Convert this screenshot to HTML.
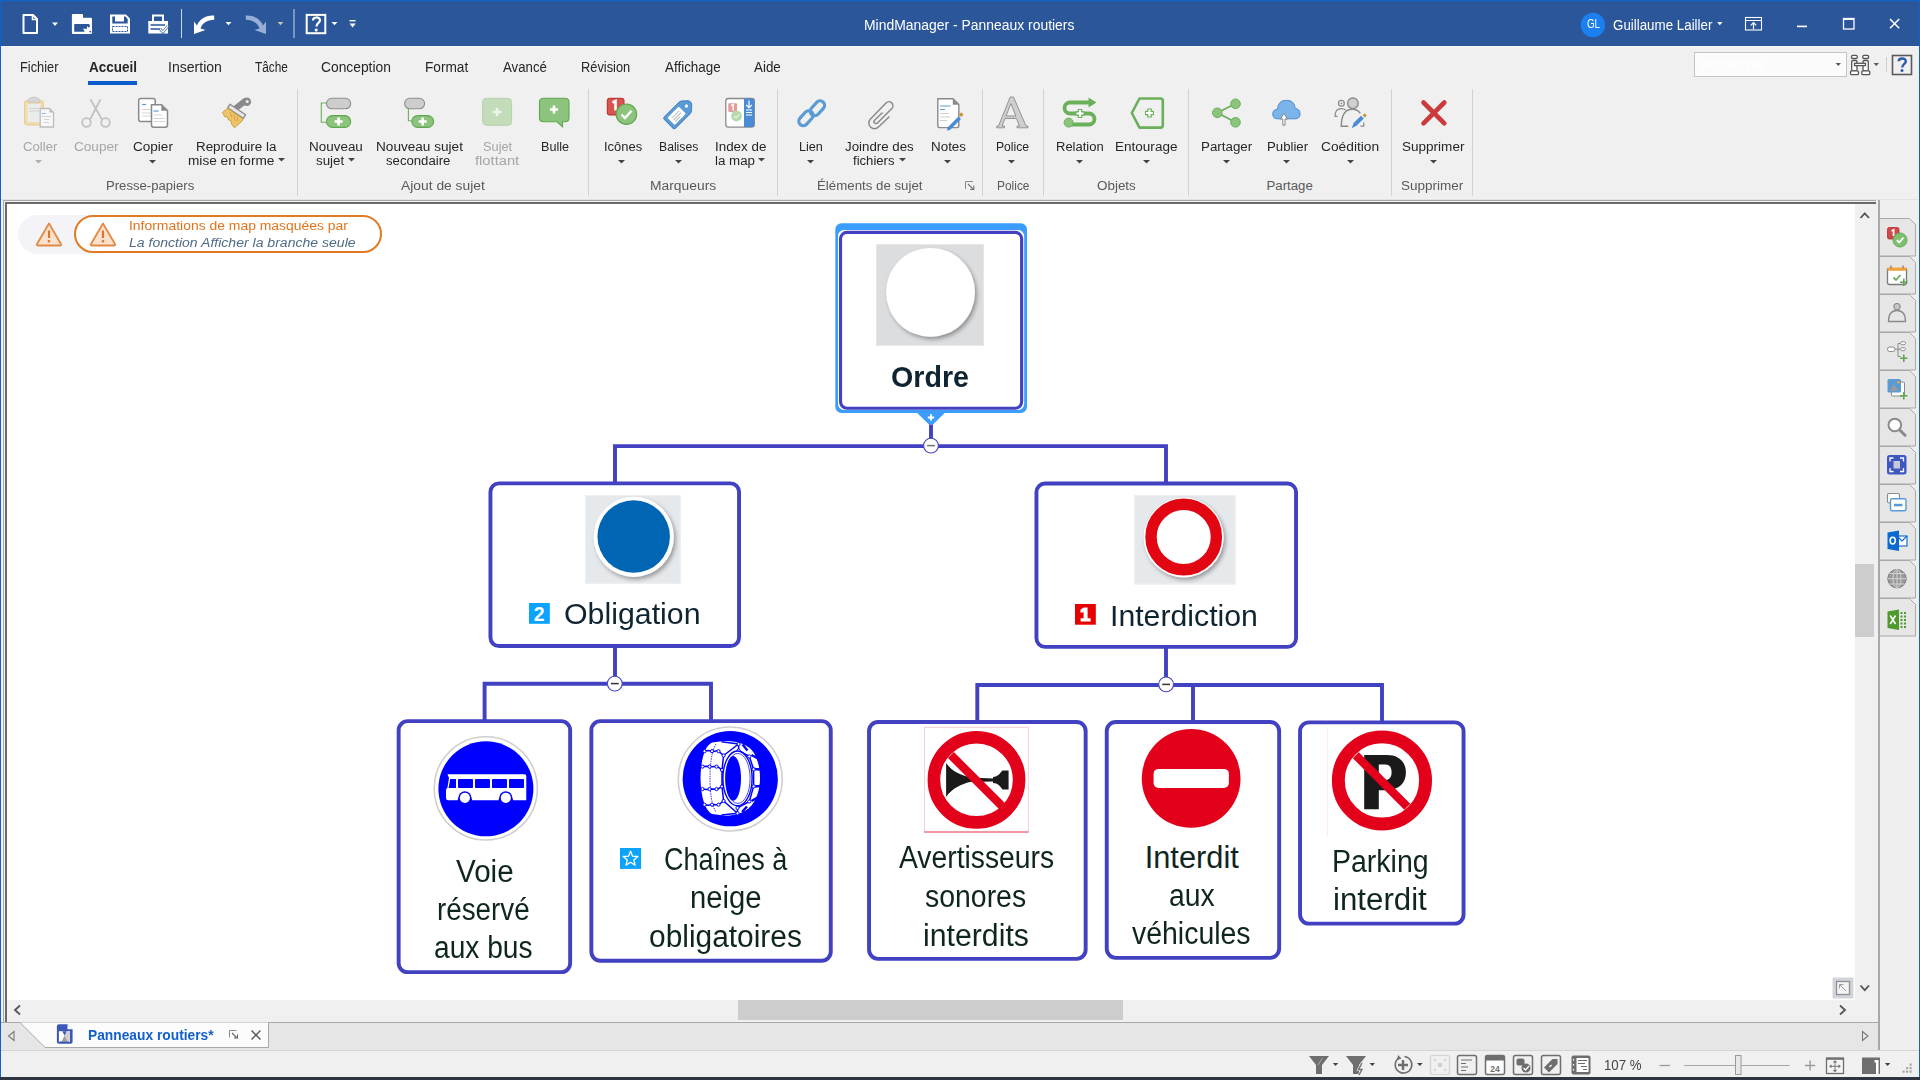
<!DOCTYPE html>
<html><head><meta charset="utf-8"><title>MindManager - Panneaux routiers</title>
<style>
html,body{margin:0;padding:0;}
body{width:1920px;height:1080px;position:relative;overflow:hidden;background:#f0f0f0;font-family:"Liberation Sans",sans-serif;}
.t{position:absolute;white-space:nowrap;transform-origin:0 0;}
svg{overflow:visible;}
</style></head><body>
<div style="position:absolute;left:0px;top:0px;width:1920px;height:46px;background:#2b579a;"></div><div style="position:absolute;left:0px;top:0px;width:1920px;height:1px;background:#0d63cc;"></div><div style="position:absolute;left:0px;top:0px;width:1px;height:1080px;background:#0d63cc;"></div><div style="position:absolute;left:1919px;top:0px;width:1px;height:1080px;background:#0d63cc;"></div><div style="position:absolute;left:1px;top:46px;width:1918px;height:1px;background:#f7f3ee;"></div><div style="position:absolute;left:0px;top:1077px;width:1920px;height:3px;background:#2d3640;"></div><div style="position:absolute;left:1px;top:199px;width:1917px;height:1px;background:#e2e2e2;"></div><div style="position:absolute;left:3px;top:200px;width:1876px;height:1px;background:#a8a8a8;"></div><div style="position:absolute;left:3px;top:200px;width:1px;height:822px;background:#a8a8a8;"></div><div style="position:absolute;left:5px;top:202px;width:1871px;height:2px;background:#6a6a6a;"></div><div style="position:absolute;left:5px;top:202px;width:2px;height:820px;background:#6a6a6a;"></div><div style="position:absolute;left:7px;top:204px;width:1848px;height:796px;background:#ffffff;"></div><div style="position:absolute;left:1855px;top:204px;width:21px;height:796px;background:#f0f0f0;"></div><div style="position:absolute;left:7px;top:1000px;width:1869px;height:22px;background:#f0f0f0;"></div><div style="position:absolute;left:1876px;top:200px;width:2px;height:822px;background:#f0f0f0;"></div><div style="position:absolute;left:1878px;top:200px;width:2px;height:850px;background:#a8a8a8;"></div><div style="position:absolute;left:3px;top:1022px;width:1876px;height:1px;background:#a8a8a8;"></div><div style="position:absolute;left:1px;top:1023px;width:1877px;height:27px;background:#e6e6e6;"></div><div style="position:absolute;left:1px;top:1050px;width:1918px;height:1px;background:#d4d4d4;"></div><div style="position:absolute;left:1880px;top:200px;width:38px;height:850px;background:#efefef;"></div><svg style="position:absolute;left:0px;top:0px;" width="1920" height="1080" viewBox="0 0 1920 1080"><path d="M841.5,223.3 H1020.8 A6.2,6.2 0 0 1 1027,229.5 V406.8 A6.2,6.2 0 0 1 1020.8,413 H841.5 A6.2,6.2 0 0 1 835.3,406.8 V229.5 A6.2,6.2 0 0 1 841.5,223.3 Z M844,230 H1018 A6,6 0 0 1 1024.2,236 V404 A6,6 0 0 1 1018,410 H844 A6,6 0 0 1 838,404 V236 A6,6 0 0 1 844,230 Z" fill="#3d9dff" fill-rule="evenodd"/><path d="M916.7,412.5 H945.2 L933,424.6 H929 Z" fill="#3d9dff"/><path d="M931,414.2 V420.6 M927.8,417.4 H934.2" stroke="#fff" stroke-width="2"/><path d="M931,424.5 V446.1" stroke="#4141c1" stroke-width="3.9" fill="none"/><path d="M615,484 V446.1 H1166 V484" stroke="#4141c1" stroke-width="3.9" fill="none" stroke-linejoin="miter"/><path d="M615,646 V683.75" stroke="#4141c1" stroke-width="3.9" fill="none"/><path d="M484.6,722 V683.75 H711 V722" stroke="#4141c1" stroke-width="3.9" fill="none" stroke-linejoin="miter"/><path d="M1166,647 V685" stroke="#4141c1" stroke-width="3.9" fill="none"/><path d="M977.3,722 V685 H1382 V722" stroke="#4141c1" stroke-width="3.9" fill="none" stroke-linejoin="miter"/><path d="M1193,685 V722" stroke="#4141c1" stroke-width="3.9" fill="none"/><rect x="840.55" y="232.35" width="181.10" height="175.90" rx="6.5" ry="6.5" fill="#fff" stroke="#4141c1" stroke-width="3.1"/><rect x="490.45" y="483.35" width="248.60" height="162.70" rx="8.5" ry="8.5" fill="#fff" stroke="#4141c1" stroke-width="3.9"/><rect x="1036.45" y="483.55" width="259.60" height="163.30" rx="8.5" ry="8.5" fill="#fff" stroke="#4141c1" stroke-width="3.9"/><rect x="398.65" y="721.15" width="171.50" height="251.00" rx="9" ry="9" fill="#fff" stroke="#4141c1" stroke-width="3.9"/><rect x="591.35" y="721.15" width="239.40" height="239.60" rx="9" ry="9" fill="#fff" stroke="#4141c1" stroke-width="3.9"/><rect x="869.05" y="721.95" width="216.60" height="236.90" rx="9" ry="9" fill="#fff" stroke="#4141c1" stroke-width="3.9"/><rect x="1106.75" y="721.95" width="172.40" height="235.90" rx="9" ry="9" fill="#fff" stroke="#4141c1" stroke-width="3.9"/><rect x="1300.05" y="722.35" width="163.50" height="201.30" rx="9" ry="9" fill="#fff" stroke="#4141c1" stroke-width="3.9"/><circle cx="931" cy="445.6" r="7.4" fill="#fff" stroke="#4848c8" stroke-width="1.1"/><path d="M927.1,445.6 H934.9" stroke="#707070" stroke-width="1.5"/><circle cx="614.8" cy="683.6" r="7.4" fill="#fff" stroke="#4848c8" stroke-width="1.1"/><path d="M610.9,683.6 H618.6999999999999" stroke="#333" stroke-width="1.5"/><circle cx="1166.1" cy="684.4" r="7.4" fill="#fff" stroke="#4848c8" stroke-width="1.1"/><path d="M1162.1999999999998,684.4 H1170.0" stroke="#333" stroke-width="1.5"/></svg><svg style="position:absolute;left:0px;top:0px;" width="1920" height="1080" viewBox="0 0 1920 1080"><defs><filter id="sh" x="-30%" y="-30%" width="160%" height="160%"><feDropShadow dx="2" dy="2.5" stdDeviation="2" flood-color="#000" flood-opacity="0.35"/></filter></defs><rect x="876" y="244" width="108" height="102" fill="#dcdddf"/><rect x="876.5" y="244.5" width="107" height="101" fill="none" stroke="#e6e7e9" stroke-width="1"/><circle cx="930.5" cy="292.3" r="44.4" fill="#fff" filter="url(#sh)"/><rect x="585" y="495" width="95.7" height="88.7" fill="#e6e9ec"/><rect x="585.5" y="495.5" width="94.7" height="87.7" fill="none" stroke="#eef0f2" stroke-width="1"/><circle cx="633.7" cy="536.8" r="40.1" fill="#fff" filter="url(#sh)"/><circle cx="633.7" cy="536.5" r="36.25" fill="#0066b3"/><rect x="1134.2" y="495" width="101.4" height="89.4" fill="#e6e9ec"/><rect x="1134.7" y="495.5" width="100.4" height="88.4" fill="none" stroke="#eef0f2" stroke-width="1"/><circle cx="1183.7" cy="537.4" r="39.9" fill="#fff" filter="url(#sh)"/><circle cx="1183.7" cy="537" r="32.7" fill="none" stroke="#e20613" stroke-width="11.4"/><circle cx="485.8" cy="788.4" r="51.6" fill="#fff" stroke="#cfcfcf" stroke-width="1.6"/><circle cx="485.9" cy="788.8" r="47.5" fill="#0000fe"/><path d="M447.5,774.2 H524.5 Q526.3,774.2 526.3,776 V800.3 H513.2 A7.6,7.6 0 0 0 498.4,800.3 H472.3 A7.6,7.6 0 0 0 457.5,800.3 H448.2 Q446,800.3 446,798 V789.5 L447.5,787.5 L449,778 Z" fill="#fff"/><g fill="#0000fe"><path d="M450.2,779 H456 V788 H448.6 Z"/><rect x="458" y="779" width="15" height="9" rx="0.8"/><rect x="475" y="779" width="15" height="9" rx="0.8"/><rect x="492" y="779" width="15" height="9" rx="0.8"/><rect x="509" y="779" width="15" height="9" rx="0.8"/></g><circle cx="464.9" cy="797.8" r="6.6" fill="#0000fe"/><circle cx="464.9" cy="797.8" r="5.1" fill="#fff"/><circle cx="505.8" cy="797.8" r="6.6" fill="#0000fe"/><circle cx="505.8" cy="797.8" r="5.1" fill="#fff"/><circle cx="730.25" cy="779" r="52" fill="#fff" stroke="#cfcfcf" stroke-width="1.6"/><circle cx="730.25" cy="778.7" r="47.6" fill="#0000fe"/><path d="M712,742.5 C705,746 701,758 700.5,778 C701,798 705,810 712,814 L724,815.6 C736,816 748,812 754,802 C758.5,794 760,786 760,778 C760,770 758.5,761 754,753 C748,744 736,740.5 724,741 Z" fill="#fff"/><g fill="none" stroke="#0000fe" stroke-width="1.5" stroke-linejoin="round"><path d="M703,751.2 L708.5,750.6 L713,751.4 L718,750.8 L723.6,755.5"/><path d="M701.3,766.6 L707,766.2 L712.5,766.8 L717,766.2 L722,770"/><path d="M701.3,789.1 L707,789.6 L712.5,789 L717,789.6 L722,786.5"/><path d="M703,804.7 L708.5,805.3 L713,804.5 L718,805.1 L723.6,801"/><path d="M723.6,755.5 L738.6,744 L738.6,750.5 L749.3,756.4 L753.6,769.3 L753.6,786.4 L749.3,801.5 L737.5,807.9 L737.5,813.3 L723.6,801"/><path d="M722,770 L723.6,755.5 M722,786.5 L723.6,801 M722,770 V786.5"/><path d="M738.6,744 L721.5,741.8 M737.5,813.3 L721.5,815"/></g><g fill="none" stroke="#0000fe" stroke-width="2.4"><path d="M742.5,744.5 L747.5,750.5 M751.5,755 L759,759 M754,769 L760.5,769.5 M754,786.5 L760.5,786 M751.5,801 L758.5,797 M742,812 L747,806.5"/></g><g fill="none" stroke="#0000fe" stroke-width="0.8" stroke-dasharray="1.5,1"><path d="M716,744 C711,752 710,768 710,778 C710,790 711,804 716,812"/></g><g fill="#fff" stroke="#0000fe" stroke-width="1"><circle cx="704.5" cy="751.2" r="1.6"/><circle cx="712" cy="751.2" r="1.6"/><circle cx="718.5" cy="751.2" r="1.6"/><circle cx="702.5" cy="766.6" r="1.6"/><circle cx="709.5" cy="766.6" r="1.6"/><circle cx="716.5" cy="766.6" r="1.6"/><circle cx="702.5" cy="789.1" r="1.6"/><circle cx="709.5" cy="789.1" r="1.6"/><circle cx="716.5" cy="789.1" r="1.6"/><circle cx="704.5" cy="804.7" r="1.6"/><circle cx="712" cy="804.7" r="1.6"/><circle cx="718.5" cy="804.7" r="1.6"/><circle cx="738.6" cy="744" r="1.6"/><circle cx="738.6" cy="750.5" r="1.6"/><circle cx="749.3" cy="756.4" r="1.6"/><circle cx="753.6" cy="769.3" r="1.6"/><circle cx="753.6" cy="786.4" r="1.6"/><circle cx="749.3" cy="801.5" r="1.6"/><circle cx="737.5" cy="807.9" r="1.6"/><circle cx="737.5" cy="813.3" r="1.6"/><circle cx="723.6" cy="755.5" r="1.6"/><circle cx="722" cy="770" r="1.6"/><circle cx="722" cy="786.5" r="1.6"/><circle cx="723.6" cy="801" r="1.6"/></g><ellipse cx="737.5" cy="778.4" rx="14.6" ry="27.4" fill="#fff" stroke="#0000fe" stroke-width="1.4"/><ellipse cx="737.8" cy="778.4" rx="12.3" ry="25" fill="none" stroke="#0000fe" stroke-width="0.7"/><ellipse cx="733.2" cy="778.4" rx="7.8" ry="22.3" fill="#0000fe"/><rect x="924.5" y="727.3" width="103.8" height="104.7" fill="none" stroke="#f6c4cc" stroke-width="0.8"/><path d="M924.3,832 H1028.6" stroke="#e84a5f" stroke-width="1"/><circle cx="976.5" cy="779.8" r="42.6" fill="#fff" stroke="#e2001a" stroke-width="12.6"/><path d="M946.1,763 C952,772 962,775 970,777.5 L993,778.5 L993,777 C998,777 1000,773 1002.5,770.5 L1008.6,770.5 V789.6 H1002.5 C1000,786 998,783 993,783 L993,781.5 L970,782 C962,784 952,788 946.1,797 Z" fill="#1a1a1a"/><path d="M950.9,755 L1001.9,806" stroke="#e2001a" stroke-width="8.4"/><circle cx="1191.15" cy="778.45" r="49.4" fill="#e2001a"/><rect x="1153.6" y="768.9" width="75.3" height="19.1" rx="5" fill="#fff"/><path d="M1327.3,727 V836" stroke="#fbe2e6" stroke-width="0.8"/><circle cx="1381.95" cy="780.45" r="43.6" fill="#fff" stroke="#e2001a" stroke-width="12.9"/><path d="M1364.2,755 H1387 C1399,755 1405.9,762 1405.9,772.6 C1405.9,783 1399,790.2 1387,790.2 H1378.8 V809.3 H1364.2 Z M1378.8,764.6 V780 H1385.5 C1389.5,780 1391.6,777 1391.6,772.3 C1391.6,767.5 1389.5,764.6 1385.5,764.6 Z" fill="#1a1a1a" fill-rule="evenodd"/><path d="M1355.8,755.2 L1407.3,806.7" stroke="#e2001a" stroke-width="8.4"/></svg><div class="t" style="left:891.20px;top:362.15px;font-size:29.94px;line-height:29.94px;color:#0e2430;font-weight:bold;transform:scaleX(0.9560);">Ordre</div><div class="t" style="left:563.62px;top:599.33px;font-size:29.65px;line-height:29.65px;color:#0e2430;transform:scaleX(1.0230);">Obligation</div><div class="t" style="left:1110.01px;top:600.29px;font-size:30.38px;line-height:30.38px;color:#0e2430;transform:scaleX(0.9952);">Interdiction</div><div class="t" style="left:455.62px;top:856.82px;font-size:30.81px;line-height:30.81px;color:#0f2520;transform:scaleX(0.9621);">Voie</div><div class="t" style="left:436.77px;top:895.20px;font-size:30.81px;line-height:30.81px;color:#0f2520;transform:scaleX(0.9021);">réservé</div><div class="t" style="left:433.72px;top:933.25px;font-size:30.81px;line-height:30.81px;color:#0f2520;transform:scaleX(0.9135);">aux bus</div><div class="t" style="left:663.86px;top:844.82px;font-size:30.81px;line-height:30.81px;color:#0f2520;transform:scaleX(0.8778);">Chaînes à</div><div class="t" style="left:689.63px;top:883.39px;font-size:30.81px;line-height:30.81px;color:#0f2520;transform:scaleX(0.9492);">neige</div><div class="t" style="left:648.72px;top:921.58px;font-size:30.81px;line-height:30.81px;color:#0f2520;transform:scaleX(0.9707);">obligatoires</div><div class="t" style="left:898.81px;top:843.39px;font-size:30.81px;line-height:30.81px;color:#0f2520;transform:scaleX(0.9187);">Avertisseurs</div><div class="t" style="left:925.29px;top:881.82px;font-size:30.81px;line-height:30.81px;color:#0f2520;transform:scaleX(0.9228);">sonores</div><div class="t" style="left:922.63px;top:920.63px;font-size:30.81px;line-height:30.81px;color:#0f2520;transform:scaleX(0.9823);">interdits</div><div class="t" style="left:1144.68px;top:842.58px;font-size:30.81px;line-height:30.81px;color:#0f2520;">Interdit</div><div class="t" style="left:1169.10px;top:880.63px;font-size:30.81px;line-height:30.81px;color:#0f2520;transform:scaleX(0.9194);">aux</div><div class="t" style="left:1132.24px;top:919.44px;font-size:30.81px;line-height:30.81px;color:#0f2520;transform:scaleX(0.9235);">véhicules</div><div class="t" style="left:1332.44px;top:846.63px;font-size:30.81px;line-height:30.81px;color:#0f2520;transform:scaleX(0.9248);">Parking</div><div class="t" style="left:1333.20px;top:885.20px;font-size:30.81px;line-height:30.81px;color:#0f2520;transform:scaleX(1.0147);">interdit</div><svg style="position:absolute;left:529px;top:603px;" width="21" height="21" viewBox="0 0 21 21"><rect width="20.8" height="20.8" fill="#0aa3ff"/><text x="10.3" y="17.7" text-anchor="middle" font-family="Liberation Sans" font-weight="bold" font-size="19.5" fill="#fff">2</text></svg><svg style="position:absolute;left:1075px;top:604px;" width="21" height="21" viewBox="0 0 21 21"><rect width="20.8" height="20.7" fill="#e60000"/><path d="M8.6,3.5 H12.6 V14.2 H15.6 V17.6 H5.6 V14.2 H8.6 V8.2 L5.5,8.8 V5.8 Z" fill="#fff"/></svg><svg style="position:absolute;left:620px;top:848px;" width="21" height="21" viewBox="0 0 21 21"><rect width="21.1" height="20.9" fill="#0ca4fb"/><path d="M10.55,3.2 L12.6,8.2 L17.9,8.5 L13.8,11.9 L15.1,17.1 L10.55,14.2 L6,17.1 L7.3,11.9 L3.2,8.5 L8.5,8.2 Z" fill="none" stroke="#fff" stroke-width="1.3" stroke-linejoin="round"/></svg><svg style="position:absolute;left:0px;top:0px;" width="1920" height="46" viewBox="0 0 1920 46"><path d="M23.5,15 H33 L37,19 V33 H23.5 Z" fill="none" stroke="#fff" stroke-width="2" stroke-linejoin="round"/><path d="M32.5,15 V19.5 H37" fill="none" stroke="#fff" stroke-width="1.6"/><path d="M52,22.5 H58 L55,26 Z" fill="#fff"/><path d="M73,13.9 H82 Q83,13.9 83,15 V17.8 H90.8 Q92,17.8 92,19 V32.7 Q92,33.9 90.8,33.9 H73 Q71.9,33.9 71.9,32.7 V15 Q71.9,13.9 73,13.9 Z" fill="#fff"/><path d="M74.2,24.6 L75,24.1 H88.8 L89.8,25 V27 L88.5,27.5 L87,26 V28.8 H83 L84.5,31 V31.8 H74.2 Z" fill="#2b579a"/><path d="M89.5,31 L91,32.3" stroke="#2b579a" stroke-width="1.3"/><path d="M110,14.5 H126 L130,18.5 V33.5 H110 Z" fill="#fff"/><path d="M112.3,16.4 H115 V21.5 H124 V16.4 H125.5 L127.7,19 V23.5 H112.3 Z" fill="#2b579a"/><path d="M112.5,26.5 H127.5 V31.5 H112.5 Z" fill="none" stroke="#2b579a" stroke-width="1" stroke-dasharray="2,1"/><path d="M152,14.5 H164 V21 H168 V33.5 H148.3 V21 H152 Z" fill="#fff"/><path d="M154,16.5 H162 V21 H154 Z" fill="#2b579a"/><path d="M150.5,25 H165 M150.5,29 H160" stroke="#2b579a" stroke-width="1.6"/><path d="M160,29 L163,32 L168,26" stroke="#2b579a" stroke-width="2.6" fill="none"/><path d="M160,29 L163,32 L168,26" stroke="#fff" stroke-width="1.3" fill="none"/><rect x="181" y="9" width="1" height="29" fill="#c8d4e8"/><path d="M214.2,15.5 C205,15 199,20 197,25.5 L194,21.5 L194,34 L205.5,30 L200.5,28.5 C202,23.5 207,19.8 214.2,19.8 Z" fill="#fff"/><path d="M225.5,22 H231.5 L228.5,25.3 Z" fill="#fff"/><path d="M245.8,15.5 C255,15 261,20 263,25.5 L266,21.5 L266,34 L254.5,30 L259.5,28.5 C258,23.5 253,19.8 245.8,19.8 Z" fill="#97afd6"/><path d="M277.5,22 H283.5 L280.5,25.3 Z" fill="#c9c1b1"/><rect x="293.5" y="9" width="1" height="29" fill="#c8d4e8"/><rect x="306.7" y="14.9" width="18.6" height="18.3" fill="none" stroke="#fff" stroke-width="2"/><path d="M313,20.5 C313,16.5 320,16.5 320,20.3 C320,23 316.5,23 316.5,26.5" fill="none" stroke="#fff" stroke-width="2.2"/><circle cx="316.2" cy="30" r="1.5" fill="#fff"/><path d="M331.5,22 H337.5 L334.5,25.3 Z" fill="#fff"/><rect x="349.5" y="20" width="6" height="1.4" fill="#fff"/><path d="M349.5,23.5 H355.7 L352.6,27.5 Z" fill="#fff"/><circle cx="1592.9" cy="25" r="12.2" fill="#1b7ff0"/><path d="M1717.2,22 H1722.5 L1719.8,25.2 Z" fill="#fff"/><rect x="1745.5" y="17.5" width="16" height="12.5" fill="none" stroke="#fff" stroke-width="1.1"/><path d="M1745.5,20.5 H1761.5" stroke="#fff" stroke-width="1"/><path d="M1753.5,29 V22.5 M1750.8,25.3 L1753.5,22.5 L1756.2,25.3" stroke="#fff" stroke-width="1.2" fill="none"/><rect x="1797" y="25.6" width="10" height="1.6" fill="#fff"/><rect x="1843.5" y="18.5" width="10.5" height="10.5" fill="none" stroke="#fff" stroke-width="1.3"/><rect x="1843.5" y="18.5" width="10.5" height="1.5" fill="#fff"/><path d="M1890,19 L1899.2,28.2 M1899.2,19 L1890,28.2" stroke="#fff" stroke-width="1.5"/></svg><div class="t" style="left:864.40px;top:17.94px;font-size:14.24px;line-height:14.24px;color:#ffffff;transform:scaleX(0.9778);">MindManager - Panneaux routiers</div><div class="t" style="left:1586.50px;top:18.42px;font-size:12.50px;line-height:12.50px;color:#ffffff;transform:scaleX(0.7790);">GL</div><div class="t" style="left:1612.50px;top:17.94px;font-size:14.24px;line-height:14.24px;color:#ffffff;transform:scaleX(0.9376);">Guillaume Lailler</div><div class="t" style="left:19.50px;top:59.60px;font-size:14.53px;line-height:14.53px;color:#262626;transform:scaleX(0.8829);">Fichier</div><div class="t" style="left:89.00px;top:59.60px;font-size:14.53px;line-height:14.53px;color:#262626;font-weight:bold;transform:scaleX(0.9289);">Accueil</div><div class="t" style="left:168.00px;top:59.60px;font-size:14.53px;line-height:14.53px;color:#262626;transform:scaleX(0.9688);">Insertion</div><div class="t" style="left:255.00px;top:59.60px;font-size:14.53px;line-height:14.53px;color:#262626;transform:scaleX(0.8167);">Tâche</div><div class="t" style="left:321.00px;top:59.60px;font-size:14.53px;line-height:14.53px;color:#262626;transform:scaleX(0.9518);">Conception</div><div class="t" style="left:425.00px;top:59.60px;font-size:14.53px;line-height:14.53px;color:#262626;transform:scaleX(0.9412);">Format</div><div class="t" style="left:503.00px;top:59.60px;font-size:14.53px;line-height:14.53px;color:#262626;transform:scaleX(0.9118);">Avancé</div><div class="t" style="left:580.80px;top:59.60px;font-size:14.53px;line-height:14.53px;color:#262626;transform:scaleX(0.8826);">Révision</div><div class="t" style="left:665.00px;top:59.60px;font-size:14.53px;line-height:14.53px;color:#262626;transform:scaleX(0.9251);">Affichage</div><div class="t" style="left:754.00px;top:59.60px;font-size:14.53px;line-height:14.53px;color:#262626;transform:scaleX(0.9219);">Aide</div><div style="position:absolute;left:88px;top:81px;width:49px;height:4px;background:#0b5ccc;"></div><div style="position:absolute;left:1694px;top:52px;width:153px;height:25px;background:#fbfbfb;border:1px solid #c4c4c4;box-sizing:border-box;"></div><div class="t" style="left:1699.60px;top:57.74px;font-size:14.24px;line-height:14.24px;color:#ffffff;transform:scaleX(0.8935);">Rechercher</div><svg style="position:absolute;left:0px;top:0px;" width="1920" height="90" viewBox="0 0 1920 90"><path d="M1835.5,63 H1841 L1838.25,66 Z" fill="#5a5a5a"/><g fill="#fff" stroke="#555" stroke-width="1.3"><rect x="1851.5" y="55.3" width="5.8" height="3.2" rx="1.2"/><rect x="1862.8" y="55.3" width="5.8" height="3.2" rx="1.2"/><rect x="1851.7" y="60.5" width="5.3" height="10.5" rx="1.2"/><rect x="1863" y="60.5" width="5.3" height="10.5" rx="1.2"/><rect x="1850.5" y="70.8" width="8" height="3.9" rx="1.2"/><rect x="1861.8" y="70.8" width="8" height="3.9" rx="1.2"/><rect x="1854.5" y="63.3" width="11" height="2.3"/></g><path d="M1873.5,63 H1879 L1876.25,66 Z" fill="#5a5a5a"/><rect x="1886" y="57" width="1" height="15" fill="#d0d0d0"/><rect x="1892.5" y="55.5" width="19" height="19" fill="none" stroke="#5a5a5a" stroke-width="1.6"/><path d="M1898.7,61.3 C1898.7,57.6 1905.8,57.4 1905.8,61.3 C1905.8,64.3 1902.2,64 1902.2,67.5" fill="none" stroke="#2b5aa8" stroke-width="2.4"/><circle cx="1902" cy="70.5" r="1.5" fill="#2b5aa8"/></svg><div style="position:absolute;left:296.5px;top:89px;width:1px;height:107px;background:#d2d2d2;"></div><div style="position:absolute;left:587.5px;top:89px;width:1px;height:107px;background:#d2d2d2;"></div><div style="position:absolute;left:776.5px;top:89px;width:1px;height:107px;background:#d2d2d2;"></div><div style="position:absolute;left:981.5px;top:89px;width:1px;height:107px;background:#d2d2d2;"></div><div style="position:absolute;left:1043.3px;top:89px;width:1px;height:107px;background:#d2d2d2;"></div><div style="position:absolute;left:1188.3px;top:89px;width:1px;height:107px;background:#d2d2d2;"></div><div style="position:absolute;left:1390.6px;top:89px;width:1px;height:107px;background:#d2d2d2;"></div><div style="position:absolute;left:1472.2px;top:89px;width:1px;height:107px;background:#d2d2d2;"></div><div class="t" style="left:22.70px;top:139.60px;font-size:13.23px;line-height:13.23px;color:#a6a6a6;transform:scaleX(0.9936);">Coller</div><svg style="position:absolute;left:35.0px;top:160.3px" width="7" height="4" viewBox="0 0 7 4"><path d="M0,0 H7 L3.5,3.6 Z" fill="#b0b0b0"/></svg><div class="t" style="left:74.20px;top:139.60px;font-size:13.23px;line-height:13.23px;color:#a6a6a6;transform:scaleX(1.0269);">Couper</div><div class="t" style="left:132.80px;top:139.60px;font-size:13.23px;line-height:13.23px;color:#262626;transform:scaleX(1.0243);">Copier</div><svg style="position:absolute;left:148.8px;top:160.3px" width="7" height="4" viewBox="0 0 7 4"><path d="M0,0 H7 L3.5,3.6 Z" fill="#444"/></svg><div class="t" style="left:196.00px;top:139.60px;font-size:13.23px;line-height:13.23px;color:#262626;transform:scaleX(1.0127);">Reproduire la</div><div class="t" style="left:188.30px;top:154.40px;font-size:13.23px;line-height:13.23px;color:#262626;transform:scaleX(1.0311);">mise en forme</div><svg style="position:absolute;left:277.8px;top:158px" width="7" height="4" viewBox="0 0 7 4"><path d="M0,0 H7 L3.5,3.6 Z" fill="#444"/></svg><div class="t" style="left:106.25px;top:178.60px;font-size:13.23px;line-height:13.23px;color:#595959;transform:scaleX(0.9921);">Presse-papiers</div><div class="t" style="left:308.60px;top:139.60px;font-size:13.23px;line-height:13.23px;color:#262626;transform:scaleX(1.0175);">Nouveau</div><div class="t" style="left:316.40px;top:154.40px;font-size:13.23px;line-height:13.23px;color:#262626;transform:scaleX(1.0069);">sujet</div><svg style="position:absolute;left:348.0px;top:158px" width="7" height="4" viewBox="0 0 7 4"><path d="M0,0 H7 L3.5,3.6 Z" fill="#444"/></svg><div class="t" style="left:375.50px;top:139.60px;font-size:13.23px;line-height:13.23px;color:#262626;transform:scaleX(1.0286);">Nouveau sujet</div><div class="t" style="left:386.40px;top:154.40px;font-size:13.23px;line-height:13.23px;color:#262626;transform:scaleX(0.9957);">secondaire</div><div class="t" style="left:482.50px;top:139.60px;font-size:13.23px;line-height:13.23px;color:#a6a6a6;transform:scaleX(0.9683);">Sujet</div><div class="t" style="left:475.30px;top:154.40px;font-size:13.23px;line-height:13.23px;color:#a6a6a6;transform:scaleX(1.1139);">flottant</div><div class="t" style="left:540.60px;top:139.60px;font-size:13.23px;line-height:13.23px;color:#262626;transform:scaleX(0.9565);">Bulle</div><div class="t" style="left:400.80px;top:178.60px;font-size:13.23px;line-height:13.23px;color:#595959;transform:scaleX(1.0467);">Ajout de sujet</div><div class="t" style="left:603.50px;top:139.60px;font-size:13.23px;line-height:13.23px;color:#262626;transform:scaleX(0.9807);">Icônes</div><svg style="position:absolute;left:618.2px;top:160.3px" width="7" height="4" viewBox="0 0 7 4"><path d="M0,0 H7 L3.5,3.6 Z" fill="#444"/></svg><div class="t" style="left:659.40px;top:139.60px;font-size:13.23px;line-height:13.23px;color:#262626;transform:scaleX(0.9225);">Balises</div><svg style="position:absolute;left:675.0px;top:160.3px" width="7" height="4" viewBox="0 0 7 4"><path d="M0,0 H7 L3.5,3.6 Z" fill="#444"/></svg><div class="t" style="left:714.60px;top:139.60px;font-size:13.23px;line-height:13.23px;color:#262626;transform:scaleX(1.0133);">Index de</div><div class="t" style="left:714.60px;top:154.40px;font-size:13.23px;line-height:13.23px;color:#262626;transform:scaleX(1.0081);">la map</div><svg style="position:absolute;left:757.8px;top:158px" width="7" height="4" viewBox="0 0 7 4"><path d="M0,0 H7 L3.5,3.6 Z" fill="#444"/></svg><div class="t" style="left:649.80px;top:178.60px;font-size:13.23px;line-height:13.23px;color:#595959;transform:scaleX(1.0471);">Marqueurs</div><div class="t" style="left:799.40px;top:139.60px;font-size:13.23px;line-height:13.23px;color:#262626;transform:scaleX(0.9561);">Lien</div><svg style="position:absolute;left:806.9px;top:160.3px" width="7" height="4" viewBox="0 0 7 4"><path d="M0,0 H7 L3.5,3.6 Z" fill="#444"/></svg><div class="t" style="left:845.20px;top:139.60px;font-size:13.23px;line-height:13.23px;color:#262626;transform:scaleX(1.0061);">Joindre des</div><div class="t" style="left:853.00px;top:154.40px;font-size:13.23px;line-height:13.23px;color:#262626;transform:scaleX(0.9922);">fichiers</div><svg style="position:absolute;left:899.2px;top:158px" width="7" height="4" viewBox="0 0 7 4"><path d="M0,0 H7 L3.5,3.6 Z" fill="#444"/></svg><div class="t" style="left:930.60px;top:139.60px;font-size:13.23px;line-height:13.23px;color:#262626;transform:scaleX(1.0139);">Notes</div><svg style="position:absolute;left:943.8px;top:160.3px" width="7" height="4" viewBox="0 0 7 4"><path d="M0,0 H7 L3.5,3.6 Z" fill="#444"/></svg><div class="t" style="left:816.70px;top:178.60px;font-size:13.23px;line-height:13.23px;color:#595959;transform:scaleX(1.0043);">Éléments de sujet</div><div class="t" style="left:995.60px;top:139.60px;font-size:13.23px;line-height:13.23px;color:#262626;transform:scaleX(0.9184);">Police</div><svg style="position:absolute;left:1008.0px;top:160.3px" width="7" height="4" viewBox="0 0 7 4"><path d="M0,0 H7 L3.5,3.6 Z" fill="#444"/></svg><div class="t" style="left:997.00px;top:178.60px;font-size:13.23px;line-height:13.23px;color:#595959;transform:scaleX(0.9017);">Police</div><div class="t" style="left:1055.50px;top:139.60px;font-size:13.23px;line-height:13.23px;color:#262626;transform:scaleX(0.9827);">Relation</div><svg style="position:absolute;left:1075.7px;top:160.3px" width="7" height="4" viewBox="0 0 7 4"><path d="M0,0 H7 L3.5,3.6 Z" fill="#444"/></svg><div class="t" style="left:1115.40px;top:139.60px;font-size:13.23px;line-height:13.23px;color:#262626;transform:scaleX(1.0239);">Entourage</div><svg style="position:absolute;left:1142.5px;top:160.3px" width="7" height="4" viewBox="0 0 7 4"><path d="M0,0 H7 L3.5,3.6 Z" fill="#444"/></svg><div class="t" style="left:1096.70px;top:178.60px;font-size:13.23px;line-height:13.23px;color:#595959;transform:scaleX(1.0150);">Objets</div><div class="t" style="left:1201.40px;top:139.60px;font-size:13.23px;line-height:13.23px;color:#262626;transform:scaleX(1.0094);">Partager</div><svg style="position:absolute;left:1222.5px;top:160.3px" width="7" height="4" viewBox="0 0 7 4"><path d="M0,0 H7 L3.5,3.6 Z" fill="#444"/></svg><div class="t" style="left:1266.50px;top:139.60px;font-size:13.23px;line-height:13.23px;color:#262626;transform:scaleX(0.9975);">Publier</div><svg style="position:absolute;left:1283.0px;top:160.3px" width="7" height="4" viewBox="0 0 7 4"><path d="M0,0 H7 L3.5,3.6 Z" fill="#444"/></svg><div class="t" style="left:1321.00px;top:139.60px;font-size:13.23px;line-height:13.23px;color:#262626;transform:scaleX(1.0415);">Coédition</div><svg style="position:absolute;left:1346.8px;top:160.3px" width="7" height="4" viewBox="0 0 7 4"><path d="M0,0 H7 L3.5,3.6 Z" fill="#444"/></svg><div class="t" style="left:1266.50px;top:178.60px;font-size:13.23px;line-height:13.23px;color:#595959;">Partage</div><div class="t" style="left:1402.40px;top:139.60px;font-size:13.23px;line-height:13.23px;color:#262626;transform:scaleX(1.0239);">Supprimer</div><svg style="position:absolute;left:1429.5px;top:160.3px" width="7" height="4" viewBox="0 0 7 4"><path d="M0,0 H7 L3.5,3.6 Z" fill="#444"/></svg><div class="t" style="left:1400.60px;top:178.60px;font-size:13.23px;line-height:13.23px;color:#595959;transform:scaleX(1.0223);">Supprimer</div><svg style="position:absolute;left:0px;top:0px;" width="1920" height="200" viewBox="0 0 1920 200"><rect x="24.5" y="100.5" width="19" height="24.5" rx="2.5" fill="#f1dcae" stroke="#e8cc94" stroke-width="1"/><rect x="27.5" y="104" width="13" height="18" fill="#ececec"/><path d="M29,98.5 Q34,95.5 39,98.5 L40,102.5 H28 Z" fill="#d6d6d6" stroke="#c4c4c4" stroke-width="0.8"/><path d="M29,108.5 H39 M29,111 H39" stroke="#cfcfcf" stroke-width="0.9"/><path d="M40.2,108.5 H49.5 L53.5,112.5 V127 H40.2 Z" fill="#f7f7f7" stroke="#bdbdbd" stroke-width="1.3"/><path d="M49.5,108.5 V112.5 H53.5 Z" fill="#bdbdbd"/><path d="M41.8,113.5 H45.5" stroke="#8cb4e6" stroke-width="1"/><path d="M41.8,116.5 H51 M44,119.5 H49 M44,122.5 H49" stroke="#cfcfcf" stroke-width="0.9"/><g fill="none" stroke="#c2c2c2" stroke-width="1.8"><circle cx="86.5" cy="122.5" r="4.3"/><circle cx="105.5" cy="122.5" r="4.3"/><path d="M90,119.5 L100.5,99.5 M102,119.5 L90.5,99.5"/></g><rect x="138.7" y="98.5" width="16.5" height="23" rx="2" fill="#fff" stroke="#8a8a8a" stroke-width="1.5"/><path d="M142,104.5 H146" stroke="#5b9bd5" stroke-width="1.2"/><path d="M142,109.5 H151 M142,113 H151 M142,116 H151" stroke="#d0d0d0" stroke-width="0.9"/><path d="M151.5,104.7 H161.5 L167.5,110.5 V125 Q167.5,127.2 165.5,127.2 H153.5 Q151.5,127.2 151.5,125 Z" fill="#fff" stroke="#8a8a8a" stroke-width="1.5"/><path d="M161.3,104.7 V110.7 H167.5 Z" fill="#8a8a8a"/><path d="M153.5,111 H158.5" stroke="#5b9bd5" stroke-width="1.2"/><path d="M153.5,115 H162 M153.5,118.5 H165 M153.5,121.5 H165" stroke="#d0d0d0" stroke-width="0.9"/><path d="M234.5,107.5 L244,100 M236.5,109.5 L246,102" stroke="#8a8a8a" stroke-width="3.2" stroke-linecap="round"/><circle cx="246.8" cy="101.8" r="4.3" fill="#8a8a8a"/><circle cx="247.2" cy="101.4" r="1.5" fill="#f0f0f0"/><path d="M230,104.2 L245.6,114.8 L243.2,118.4 L227.6,107.8 Z" fill="#e6e6e6" stroke="#8a8a8a" stroke-width="1.3" stroke-linejoin="round"/><path d="M227.6,108.3 L243,118.8 L241.7,121.5 L234.4,127.8 L231.5,124 L230.8,120.5 L228.5,120 L227,116.5 L224.5,116.8 L223.5,114 L222.3,112.6 Z" fill="#efc468" stroke="#c99a3f" stroke-width="0.9" stroke-linejoin="round"/><path d="M230,112 L232,118 M233.5,114 L235.5,121.5 M237,116.5 L238,121" stroke="#c99a3f" stroke-width="0.8"/><rect x="326.5" y="98.3" width="24.2" height="10.5" rx="5.25" fill="#cdcdcd" stroke="#8f8f8f" stroke-width="1.1"/><path d="M326.5,103 H321.3 V122.3 H326.5" fill="none" stroke="#6ab05a" stroke-width="1.1"/><rect x="326.5" y="115.6" width="24.2" height="11.8" rx="5.9" fill="#8cc47e" stroke="#5fa64f" stroke-width="1.1"/><path d="M338.6,117.5 V125.5 M334.6,121.5 H342.6" stroke="#fff" stroke-width="2.6"/><rect x="404.6" y="98.3" width="20" height="10.5" rx="5.25" fill="#cdcdcd" stroke="#8f8f8f" stroke-width="1.1"/><path d="M408.4,108.8 V120.8 H411.8" fill="none" stroke="#6ab05a" stroke-width="1.1"/><rect x="411.8" y="115.6" width="21.8" height="11.8" rx="5.9" fill="#8cc47e" stroke="#5fa64f" stroke-width="1.1"/><path d="M422.7,117.5 V125.5 M418.7,121.5 H426.7" stroke="#fff" stroke-width="2.6"/><rect x="482.6" y="98.3" width="29" height="27" rx="4" fill="#c3dcb9" stroke="#b5d3a9" stroke-width="1"/><path d="M497,107.8 V116.2 M492.8,112 H501.2" stroke="#eef6ea" stroke-width="2.4"/><path d="M543.5,98.3 H565 Q569,98.3 569,102.3 V117.8 Q569,121.8 565,121.8 H562.5 V126.8 L557,121.8 H543.5 Q539.5,121.8 539.5,117.8 V102.3 Q539.5,98.3 543.5,98.3 Z" fill="#8cc47e" stroke="#5fa64f" stroke-width="1.1"/><path d="M554,105.5 V113.5 M550,109.5 H558" stroke="#fff" stroke-width="2.6"/><rect x="607.3" y="98.3" width="16.7" height="16.7" rx="2" fill="#d9534f" stroke="#b52b27" stroke-width="1"/><path d="M612.5,102.5 L615.5,101 V110.5" stroke="#fff" stroke-width="2.6" fill="none"/><circle cx="626.4" cy="114.2" r="10.2" fill="#8cc47e" stroke="#5fa64f" stroke-width="1.2"/><path d="M621.5,114.5 L625,118 L631.5,110.8" fill="none" stroke="#fff" stroke-width="2.4"/><g transform="translate(679.6,112.9) rotate(-45) scale(1.1,1.02)"><path d="M-12.5,-7.8 H6.5 Q8,-7.8 9,-6.8 L13.3,-2.5 Q14,-1.5 14,0 Q14,1.5 13.3,2.5 L9,6.8 Q8,7.8 6.5,7.8 H-12.5 Q-14,7.8 -14,6.3 V-6.3 Q-14,-7.8 -12.5,-7.8 Z" fill="#5b9bd5" stroke="#3f7fc0" stroke-width="0.9"/><rect x="-11" y="-5" width="14.5" height="10" rx="1" fill="#fff"/><circle cx="8.8" cy="0" r="1.5" fill="#fff"/><path d="M-8.5,-1.8 H1 M-8.5,0.8 H1 M-8.5,3 H-2" stroke="#b8b8b8" stroke-width="0.9"/></g><rect x="725.8" y="98.5" width="28.5" height="28.6" rx="2.5" fill="#fff" stroke="#8a8a8a" stroke-width="1.3"/><path d="M744,98.5 H751.8 Q754.3,98.5 754.3,101 V124.6 Q754.3,127.1 751.8,127.1 H744 Z" fill="#4a8bd6"/><path d="M749,100.5 V107.5 M746.2,104.8 L749,107.8 L751.8,104.8 M746,110 H752 M746,112.5 H752 M746,115 H752" stroke="#fff" stroke-width="1.2" fill="none"/><rect x="728.3" y="103.3" width="8.8" height="8.8" rx="1" fill="#e59b9b"/><path d="M731.2,105.5 L733.2,104.6 V110.5" stroke="#fff" stroke-width="1.5" fill="none"/><circle cx="736.5" cy="116" r="5.4" fill="#b5d9aa"/><path d="M734,116 L736,118 L739.3,114.3" stroke="#e8f3e4" stroke-width="1.2" fill="none"/><g fill="none" stroke="#5b9bd5" stroke-width="3.2"><rect x="-8.5" y="-4.5" width="17" height="9" rx="4.5" transform="translate(817.4,108.3) rotate(-48)"/><rect x="-8.5" y="-4.5" width="17" height="9" rx="4.5" transform="translate(806,118.2) rotate(-48)"/></g><path d="M889.5,116.5 L878.5,127 A5.5,5.5 0 0 1 870.5,119 L886,103 A4,4 0 0 1 891.8,108.6 L877.5,123 A2,2 0 0 1 874.6,120.2 L882.5,112.5" fill="none" stroke="#8a8a8a" stroke-width="1.5"/><path d="M937.8,98.8 H953 L958.8,104.6 V125.8 Q958.8,127.6 957,127.6 H939.6 Q937.8,127.6 937.8,125.8 Z" fill="#fff" stroke="#8a8a8a" stroke-width="1.4"/><path d="M952.8,98.8 V104.8 H958.8 Z" fill="#8a8a8a"/><path d="M940,106 H950.5 M940,109.5 H945" stroke="#5b9bd5" stroke-width="1.2"/><path d="M940,113.5 H949 M940,117 H950 M940,120.5 H947" stroke="#c8c8c8" stroke-width="0.9"/><path d="M947.5,127.5 L958.5,116.5 L961,119 L950,130 L947,130.5 Z" fill="#4a8bd6"/><rect x="959.5" y="113" width="3.4" height="3.4" transform="rotate(45 961.2 114.7)" fill="#c9953b"/><path d="M1010.2,97 L998.5,126 H996.8 V127.8 H1004.5 V126 H1002 L1005,118.5 H1016.5 L1019.5,126 H1017 V127.8 H1028 V126 H1026 L1013.5,97 Z M1006,116 L1011,103.5 L1015.8,116 Z" fill="#cfcfcf" stroke="#8a8a8a" stroke-width="0.9" fill-rule="evenodd"/><g fill="none" stroke="#6ab05a" stroke-width="3.8"><path d="M1089,102.5 H1070 A5.5,5.5 0 0 0 1070,113.5 H1089 A5.5,5.5 0 0 1 1089,124.5 H1069"/></g><path d="M1088.5,97.5 L1096.5,102.5 L1088.5,107.5 Z" fill="#6ab05a"/><circle cx="1068.6" cy="122.6" r="4.5" fill="#8cc47e" stroke="#6ab05a" stroke-width="1"/><path d="M1080,109 V118 M1075.5,113.5 H1084.5" stroke="#6ab05a" stroke-width="4.6"/><path d="M1080,110 V117 M1076.5,113.5 H1083.5" stroke="#fff" stroke-width="2.2"/><path d="M1139.5,98.5 H1160.5 Q1162.8,98.5 1162.8,100.8 V125.3 Q1162.8,127.6 1160.5,127.6 H1139.5 L1131.8,113 Z" fill="none" stroke="#6ab05a" stroke-width="2.6" stroke-linejoin="round"/><path d="M1149.5,108.5 V117.5 M1145,113 H1154" stroke="#6ab05a" stroke-width="4.6"/><path d="M1149.5,109.5 V116.5 M1146,113 H1153" stroke="#fff" stroke-width="2.2"/><path d="M1235.5,103.8 L1217.3,112.8 L1235.5,122.3" fill="none" stroke="#6ab05a" stroke-width="1.8"/><circle cx="1235.5" cy="103.8" r="4.8" fill="#8cc47e" stroke="#6ab05a" stroke-width="1"/><circle cx="1217.3" cy="112.8" r="4.8" fill="#8cc47e" stroke="#6ab05a" stroke-width="1"/><circle cx="1235.5" cy="122.3" r="4.8" fill="#8cc47e" stroke="#6ab05a" stroke-width="1"/><path d="M1277.5,118.8 Q1272.8,118.8 1272.8,114 Q1272.8,109.5 1277.5,109.3 Q1278,100.3 1286.5,100.3 Q1294.5,100.3 1295.2,108.5 Q1300,109 1300,113.8 Q1300,118.8 1295,118.8 Z" fill="#7ab4e8" stroke="#4a8bd6" stroke-width="1"/><path d="M1282.8,125.2 V119 H1280.4 L1283.9,113.3 L1287.4,119 H1285 V125.2 Z" fill="#fff" stroke="#7a7a7a" stroke-width="0.9" stroke-linejoin="round"/><circle cx="1341.4" cy="103.3" r="2.9" fill="none" stroke="#8a8a8a" stroke-width="1.3"/><circle cx="1341.4" cy="103.3" r="0.9" fill="#8a8a8a"/><path d="M1337.5,116.4 H1335 Q1335,108.6 1341.2,108.6 Q1344,108.6 1345.8,110" fill="none" stroke="#8a8a8a" stroke-width="1.1"/><circle cx="1352.9" cy="103.3" r="5.3" fill="#cfcfcf" stroke="#8a8a8a" stroke-width="1.3"/><path d="M1348.3,126.3 H1341.3 Q1341.3,109.3 1352.6,109.3 Q1357.5,109.3 1360.3,113.3" fill="none" stroke="#8a8a8a" stroke-width="1.4"/><path d="M1363.8,122.4 V126.2 H1360.4" fill="none" stroke="#8a8a8a" stroke-width="1.2"/><path d="M1351.8,128.2 L1353.6,123 L1361,115.8 L1363.8,118.6 L1356.5,125.8 Z" fill="#4a8bd6"/><rect x="1363.2" y="113.9" width="3" height="3" transform="rotate(45 1364.7 115.4)" fill="#c9953b"/><path d="M1423.5,102.5 L1444.3,123.3 M1444.3,102.5 L1423.5,123.3" stroke="#cc3b3b" stroke-width="4.6" stroke-linecap="round"/></svg><svg style="position:absolute;left:0px;top:0px;" width="1920" height="200" viewBox="0 0 1920 200"><path d="M965.5,189 V181.5 H973" fill="none" stroke="#8a8a8a" stroke-width="1"/><path d="M968,184 L973.5,189.5 M970,189.5 H973.8 V185.5" fill="none" stroke="#777" stroke-width="1.1"/></svg><div style="position:absolute;left:17.5px;top:214.5px;width:100px;height:39.5px;background:#f3f3f8;border-radius:20px;"></div><div style="position:absolute;left:74.4px;top:215.2px;width:307.4px;height:38.3px;background:#fff;border:2px solid #e07b24;border-radius:19.5px;box-sizing:border-box;"></div><svg style="position:absolute;left:0px;top:0px;" width="400" height="260" viewBox="0 0 400 260"><path d="M49,223.5 L61,244.0 Q62,245.5 60,245.5 H38 Q36,245.5 37,244.0 Z" fill="#fbe2cc" stroke="#e28a45" stroke-width="1.8" stroke-linejoin="round"/><path d="M49,230.5 V238.0" stroke="#d9762c" stroke-width="2.2"/><circle cx="49" cy="241.3" r="1.3" fill="#d9762c"/><path d="M103,223.5 L115,244.0 Q116,245.5 114,245.5 H92 Q90,245.5 91,244.0 Z" fill="#fbe2cc" stroke="#e28a45" stroke-width="1.8" stroke-linejoin="round"/><path d="M103,230.5 V238.0" stroke="#d9762c" stroke-width="2.2"/><circle cx="103" cy="241.3" r="1.3" fill="#d9762c"/></svg><div class="t" style="left:129.00px;top:218.56px;font-size:13.52px;line-height:13.52px;color:#e0741d;transform:scaleX(1.0300);">Informations de map masquées par</div><div class="t" style="left:129.00px;top:235.86px;font-size:13.52px;line-height:13.52px;color:#4f6b87;font-style:italic;transform:scaleX(1.0386);">La fonction Afficher la branche seule</div><svg style="position:absolute;left:0px;top:0px;" width="1920" height="1080" viewBox="0 0 1920 1080"><path d="M1860.5,218 L1864.75,213.3 L1869,218" fill="none" stroke="#555" stroke-width="1.8"/><path d="M1860.5,985.5 L1864.75,990.2 L1869,985.5" fill="none" stroke="#555" stroke-width="1.8"/><rect x="1855" y="564" width="19" height="73" fill="#cdcdcd"/><rect x="1833" y="978" width="20" height="20" fill="#cfd4dc" stroke="#d6d6d6" stroke-width="1"/><rect x="1836.5" y="981.5" width="13" height="13" fill="#f4f4f4" stroke="#8f8f8f" stroke-width="1.3"/><path d="M1839.5,984.5 L1846,991 M1839.5,984.5 H1843.5 M1839.5,984.5 V988.5" stroke="#9a9a9a" stroke-width="1" fill="none"/><path d="M20,1005.5 L15,1010 L20,1014.5" fill="none" stroke="#555" stroke-width="1.8"/><path d="M1840,1005.5 L1845,1010 L1840,1014.5" fill="none" stroke="#555" stroke-width="1.8"/><rect x="738" y="1000" width="385" height="20" fill="#cdcdcd"/></svg><svg style="position:absolute;left:0px;top:0px;" width="1920" height="1080" viewBox="0 0 1920 1080"><path d="M1880,218.5 H1909.5 L1915.5,224.5 V256 H1880" fill="#e6e6e6" stroke="#a8a8a8" stroke-width="1"/><path d="M1880,256.5 H1909.5 L1915.5,262.5 V294 H1880" fill="#e6e6e6" stroke="#a8a8a8" stroke-width="1"/><path d="M1880,294.5 H1909.5 L1915.5,300.5 V332 H1880" fill="#e6e6e6" stroke="#a8a8a8" stroke-width="1"/><path d="M1880,332.5 H1909.5 L1915.5,338.5 V370 H1880" fill="#e6e6e6" stroke="#a8a8a8" stroke-width="1"/><path d="M1880,370.5 H1909.5 L1915.5,376.5 V408 H1880" fill="#e6e6e6" stroke="#a8a8a8" stroke-width="1"/><path d="M1880,408.5 H1909.5 L1915.5,414.5 V446 H1880" fill="#e6e6e6" stroke="#a8a8a8" stroke-width="1"/><path d="M1880,446.5 H1909.5 L1915.5,452.5 V484 H1880" fill="#e6e6e6" stroke="#a8a8a8" stroke-width="1"/><path d="M1880,484.5 H1909.5 L1915.5,490.5 V522 H1880" fill="#e6e6e6" stroke="#a8a8a8" stroke-width="1"/><path d="M1880,522.5 H1909.5 L1915.5,528.5 V560 H1880" fill="#e6e6e6" stroke="#a8a8a8" stroke-width="1"/><path d="M1880,560.5 H1909.5 L1915.5,566.5 V598 H1880" fill="#e6e6e6" stroke="#a8a8a8" stroke-width="1"/><path d="M1880,598.5 H1909.5 L1915.5,604.5 V636 H1880" fill="#e6e6e6" stroke="#a8a8a8" stroke-width="1"/></svg><svg style="position:absolute;left:0px;top:0px;" width="1920" height="1080" viewBox="0 0 1920 1080"><rect x="1887.5" y="227.5" width="11.5" height="11.5" rx="1.8" fill="#d04848" stroke="#b32d2d" stroke-width="0.8"/><path d="M1891.5,231 L1893.6,230 V236" stroke="#fff" stroke-width="1.8" fill="none"/><circle cx="1900" cy="240" r="7" fill="#7fbf6f" stroke="#5fa64f" stroke-width="0.9"/><path d="M1896.8,240.1 L1899.2,242.5 L1903.4,237.7" stroke="#fff" stroke-width="1.8" fill="none"/><path d="M1887.5,269 H1906.5 V282.5 Q1906.5,284.5 1904.5,284.5 H1889.5 Q1887.5,284.5 1887.5,282.5 Z" fill="#fff" stroke="#7a7a7a" stroke-width="1.3"/><rect x="1887.5" y="267.5" width="19" height="3.3" fill="#f2a33a"/><path d="M1891,265.5 V268.5 M1903,265.5 V268.5" stroke="#7a7a7a" stroke-width="1.2"/><path d="M1893.5,277.5 L1896,280 L1900.5,275" stroke="#6ab05a" stroke-width="1.8" fill="none"/><path d="M1903.8,278.5 V286 M1900,282.2 H1907.5" stroke="#5fa64f" stroke-width="1.6"/><circle cx="1897" cy="306.6" r="3.1" fill="#c8c8c8" stroke="#8a8a8a" stroke-width="1.1"/><path d="M1888.5,321.5 Q1888.5,310.5 1897,310.5 Q1905.5,310.5 1905.5,321.5 Z" fill="none" stroke="#8a8a8a" stroke-width="1.3"/><rect x="1887.5" y="347" width="7.5" height="4.5" rx="2.25" fill="#fff" stroke="#8a8a8a" stroke-width="1"/><path d="M1895,349.2 H1898 M1898,343.5 V356.5 M1898,343.5 H1900.5 M1898,349.2 H1900.5 M1898,356.5 H1900.5" stroke="#8a8a8a" stroke-width="1" fill="none"/><rect x="1900.5" y="341.7" width="5" height="3" rx="1.5" fill="#fff" stroke="#8a8a8a" stroke-width="0.9"/><rect x="1900.5" y="347.7" width="5" height="3" rx="1.5" fill="#fff" stroke="#8a8a8a" stroke-width="0.9"/><path d="M1903.8,354.5 V362 M1900,358.2 H1907.5" stroke="#5fa64f" stroke-width="1.6"/><rect x="1891.5" y="382" width="13" height="14" rx="1" fill="#fff" stroke="#8a8a8a" stroke-width="1"/><rect x="1887.5" y="379" width="13.5" height="13.5" rx="1.5" fill="#5b9bd5"/><path d="M1889.5,391 L1894,384.5 L1898.5,391 Z" fill="#9a9a9a"/><circle cx="1898.5" cy="382.3" r="1.3" fill="#f2a33a"/><path d="M1903.8,392 V399.5 M1900,395.8 H1907.5" stroke="#5fa64f" stroke-width="1.6"/><circle cx="1894.8" cy="425" r="6.3" fill="#fff" stroke="#8a8a8a" stroke-width="2"/><path d="M1899.5,429.8 L1905,435.3" stroke="#8a8a8a" stroke-width="3" stroke-linecap="round"/><rect x="1887" y="455" width="19.5" height="19.5" rx="2.5" fill="#3f57c0"/><path d="M1890,461.5 V458 H1893.5 M1900,458 H1903.5 V461.5 M1903.5,468 V471.5 H1900 M1893.5,471.5 H1890 V468" stroke="#fff" stroke-width="1.3" fill="none"/><rect x="1893.5" y="461" width="6.5" height="7.5" fill="#c8c8d8"/><rect x="1887.5" y="493.5" width="12" height="9.5" rx="1.5" fill="#fff" stroke="#8a8a8a" stroke-width="1.1"/><rect x="1890.5" y="498.8" width="15.5" height="12" rx="1.5" fill="#fff" stroke="#5b9bd5" stroke-width="1.4"/><rect x="1894" y="503.8" width="8.5" height="2.5" fill="#5b9bd5"/><rect x="1897" y="536" width="10" height="10" fill="#fff" stroke="#0a64c8" stroke-width="1.1"/><path d="M1897,536 L1902,541 L1907,536" fill="none" stroke="#0a64c8" stroke-width="1.1"/><path d="M1887.5,532.5 L1899,530.5 V551 L1887.5,549 Z" fill="#0a6ad0"/><ellipse cx="1892.7" cy="540.6" rx="2.6" ry="3.4" fill="none" stroke="#fff" stroke-width="1.5"/><circle cx="1897" cy="578.7" r="9.2" fill="#9a9a9a" stroke="#7a7a7a" stroke-width="1"/><g stroke="#d8d8d8" stroke-width="0.9" fill="none"><ellipse cx="1897" cy="578.7" rx="4" ry="9"/><path d="M1888,578.7 H1906 M1889.5,573.5 H1904.5 M1889.5,584 H1904.5 M1897,569.5 V588"/></g><path d="M1887.5,611.5 L1899,609.5 V630 L1887.5,628 Z" fill="#4f9a2d"/><path d="M1890.2,615.5 L1895.5,624 M1895.5,615.5 L1890.2,624" stroke="#fff" stroke-width="1.6"/><g fill="#4f9a2d"><rect x="1900.5" y="612" width="2" height="2"/><rect x="1904" y="612" width="2" height="2"/><rect x="1900.5" y="615.5" width="2" height="2"/><rect x="1904" y="615.5" width="2" height="2"/><rect x="1900.5" y="619" width="2" height="2"/><rect x="1904" y="619" width="2" height="2"/><rect x="1900.5" y="622.5" width="2" height="2"/><rect x="1904" y="622.5" width="2" height="2"/><rect x="1900.5" y="626" width="2" height="2"/><rect x="1904" y="626" width="2" height="2"/></g></svg><svg style="position:absolute;left:0px;top:0px;" width="1920" height="1080" viewBox="0 0 1920 1080"><path d="M20,1022.5 L45,1047.5 H268.5 V1022.5" fill="#fcfcfc" stroke="#a8a8a8" stroke-width="1"/><path d="M1,1022.5 H20" stroke="#a8a8a8" stroke-width="1"/><path d="M14,1031.5 L8.5,1036 L14,1040.5 Z" fill="none" stroke="#7a7a7a" stroke-width="1.1"/><path d="M1862.5,1031.5 L1868,1036 L1862.5,1040.5 Z" fill="none" stroke="#7a7a7a" stroke-width="1.1"/><path d="M59,1024.2 H67.5 L72.6,1029.3 V1041.7 Q72.6,1043.8 70.5,1043.8 H59 Q56.9,1043.8 56.9,1041.7 V1026.3 Q56.9,1024.2 59,1024.2 Z" fill="#3d57b8"/><path d="M67.5,1024.2 V1029.3 H72.6 Z" fill="#fff"/><rect x="58.9" y="1031.2" width="11.1" height="10.5" fill="#fff"/><path d="M64.5,1031.2 H70 V1041.7 H64.5 Z" fill="#d0d0d0"/><path d="M61.5,1041.7 L64.5,1035.5 L67.5,1041.7 Z" fill="#a0a0a0"/><path d="M62.3,1031.2 H66.7 L64.5,1035.5 Z" fill="#3d57b8"/><path d="M60,1042 H69" stroke="#3d57b8" stroke-width="0.8"/><path d="M229.5,1037.5 V1030.5 H236.5" fill="none" stroke="#8a8a8a" stroke-width="1"/><path d="M232,1033 L237,1038 M234,1038 H237.5 V1034.5" fill="none" stroke="#666" stroke-width="1.1"/><path d="M251.5,1030.5 L260.5,1039.5 M260.5,1030.5 L251.5,1039.5" stroke="#555" stroke-width="1.4"/></svg><div class="t" style="left:88.00px;top:1028.20px;font-size:14.53px;line-height:14.53px;color:#1160cc;font-weight:bold;transform:scaleX(0.9495);">Panneaux routiers*</div><svg style="position:absolute;left:0px;top:0px;" width="1920" height="1080" viewBox="0 0 1920 1080"><path d="M1309,1056 H1329 L1322,1065 V1074 H1316 V1065 Z" fill="#6e6e6e"/><path d="M1322.5,1058 L1318,1065" stroke="#aaa" stroke-width="1"/><path d="M1332.8,1063 H1338.3 L1335.55,1066 Z" fill="#444"/><path d="M1346,1056 H1366 L1359,1065 V1074 H1353 V1065 Z" fill="#6e6e6e"/><path d="M1362,1063 L1358.5,1069.5 H1362 L1359,1075" stroke="#f0f0f0" stroke-width="2.6" fill="none"/><path d="M1362,1063 L1358.5,1069.5 H1362 L1359,1075" stroke="#6e6e6e" stroke-width="1.4" fill="none"/><path d="M1369.5,1063 H1375 L1372.25,1066 Z" fill="#444"/><path d="M1399,1057.8 A8.3,8.3 0 1 0 1404.5,1056.5" fill="none" stroke="#6e6e6e" stroke-width="1.6"/><path d="M1398,1055 L1401.5,1058.5 L1397,1060" fill="#6e6e6e"/><path d="M1403,1060 V1070 M1398,1065 H1408" stroke="#6e6e6e" stroke-width="2.4"/><path d="M1417,1063 H1422.7 L1419.85,1066 Z" fill="#444"/><rect x="1430.5" y="1055.5" width="19" height="19" rx="2" fill="none" stroke="#d2d2d2" stroke-width="1.2"/><circle cx="1440" cy="1065" r="2.3" fill="#cfcfcf"/><path d="M1434,1059 L1436,1061 M1446,1059 L1444,1061 M1434,1071 L1436,1069 M1446,1071 L1444,1069" stroke="#cfcfcf" stroke-width="1.4"/><rect x="1457.5" y="1055.5" width="19" height="19" rx="2" fill="none" stroke="#6e6e6e" stroke-width="1.5"/><path d="M1461,1060 H1472 M1461,1063.5 H1466 M1461,1067 H1468 M1461,1070.5 H1466" stroke="#6e6e6e" stroke-width="1.2"/><rect x="1485.5" y="1055.5" width="19" height="19" rx="2" fill="#fff" stroke="#6e6e6e" stroke-width="1.5"/><rect x="1485.5" y="1055.5" width="19" height="5" fill="#6e6e6e"/><text x="1495" y="1072" text-anchor="middle" font-family="Liberation Sans" font-weight="bold" font-size="8.5" fill="#6e6e6e">24</text><rect x="1513.5" y="1055.5" width="19" height="19" rx="2" fill="none" stroke="#6e6e6e" stroke-width="1.5"/><rect x="1516.5" y="1058.5" width="8" height="7" rx="2" fill="#6e6e6e"/><circle cx="1526" cy="1068" r="4.5" fill="#6e6e6e"/><path d="M1523.5,1068 L1525.5,1070 L1529,1066" stroke="#fff" stroke-width="1.2" fill="none"/><rect x="1541.5" y="1055.5" width="19" height="19" rx="2" fill="none" stroke="#6e6e6e" stroke-width="1.5"/><path d="M1544,1067.5 L1552.5,1059 H1557.5 V1064 L1549,1072.5 Z" fill="#6e6e6e"/><path d="M1549.5,1067 L1551.5,1065" stroke="#fff" stroke-width="1.3"/><rect x="1571.5" y="1055.5" width="19" height="19" rx="2" fill="#6e6e6e"/><rect x="1576.5" y="1058" width="12" height="14" fill="#fff"/><path d="M1578,1060.5 H1587 M1578,1063.5 H1585 M1581,1066.5 H1587 M1583,1069.5 H1587" stroke="#6e6e6e" stroke-width="1.1"/><path d="M1573.5,1059 V1060.5 M1573.5,1064 V1065.5 M1573.5,1069 V1070.5" stroke="#fff" stroke-width="1.2"/><path d="M1659.6,1065.5 H1670" stroke="#9a9a9a" stroke-width="1.3"/><path d="M1684.2,1065.5 H1789.7" stroke="#a8a8a8" stroke-width="1"/><rect x="1735.5" y="1055.5" width="5.5" height="19" fill="#e8e8e8" stroke="#9a9a9a" stroke-width="1"/><path d="M1805,1065.5 H1815.2 M1810.1,1060.4 V1070.6" stroke="#9a9a9a" stroke-width="1.4"/><rect x="1826.5" y="1058" width="17" height="15.5" fill="#f4f4f4" stroke="#6e6e6e" stroke-width="1.3"/><rect x="1826.5" y="1058" width="17" height="1.8" fill="#6e6e6e"/><path d="M1835,1061.5 V1071 M1830,1066.3 H1840" stroke="#6e6e6e" stroke-width="0.9"/><path d="M1833.5,1062.5 L1835,1061 L1836.5,1062.5 M1833.5,1070 L1835,1071.5 L1836.5,1070 M1831.5,1065 L1830,1066.3 L1831.5,1067.6 M1838.5,1065 L1840,1066.3 L1838.5,1067.6" stroke="#6e6e6e" stroke-width="1.1" fill="none"/><rect x="1862" y="1057.5" width="18" height="16.5" fill="#6e6e6e"/><path d="M1874.5,1060 H1878.5 V1074 H1876 V1062.5 H1874.5 Z" fill="#fff"/><path d="M1884.8,1063 H1890.4 L1887.6,1066 Z" fill="#444"/><g fill="#a8a8a8"><rect x="1909.5" y="1063.5" width="2.2" height="2.2"/><rect x="1906" y="1067" width="2.2" height="2.2"/><rect x="1909.5" y="1067" width="2.2" height="2.2"/><rect x="1902.5" y="1070.5" width="2.2" height="2.2"/><rect x="1906" y="1070.5" width="2.2" height="2.2"/><rect x="1909.5" y="1070.5" width="2.2" height="2.2"/></g></svg><div class="t" style="left:1604.00px;top:1057.82px;font-size:14.39px;line-height:14.39px;color:#444444;transform:scaleX(0.9217);">107 %</div>
</body></html>
